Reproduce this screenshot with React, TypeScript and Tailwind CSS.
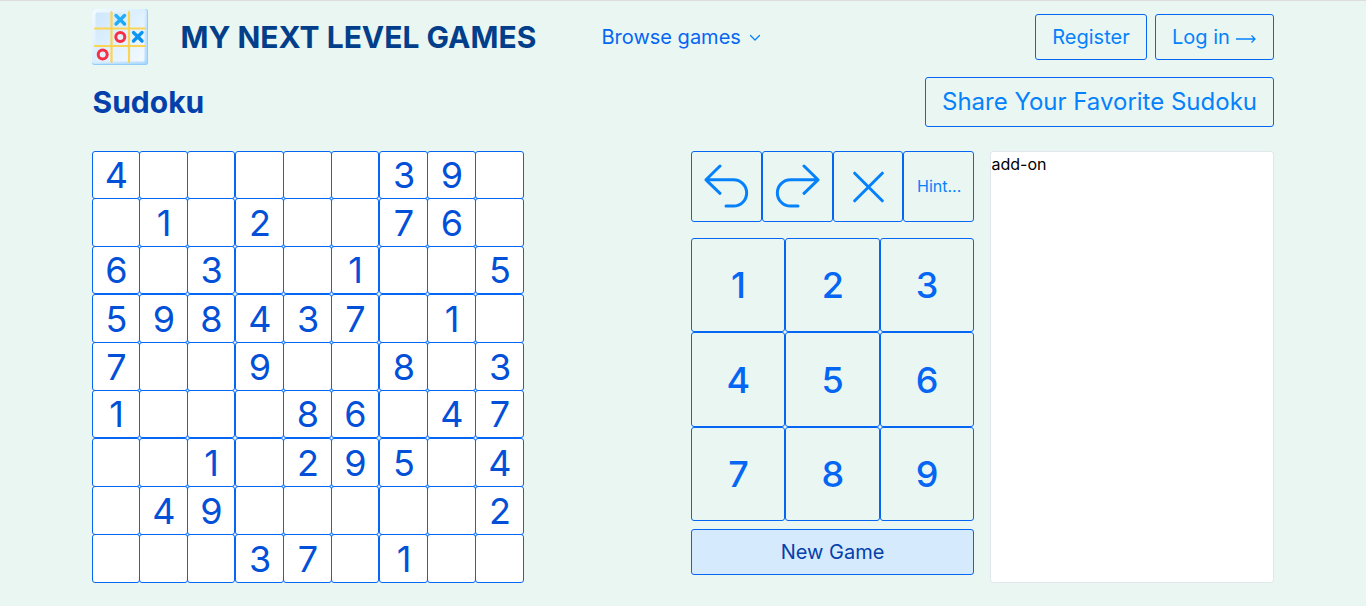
const ROWS = [
  '4.....39.',
  '.1.2..76.',
  '6.3..1..5',
  '598437.1.',
  '7..9..8.3',
  '1...86.47',
  '..1.295.4',
  '.49.....2',
  '...37.1..',
];

// Neighbouring cells inside a 3x3 box share one border line.
const COLS = [
  'w-[48px]', '-ml-px w-[49px]', '-ml-px w-[48px]',
  'w-[49px]', '-ml-px w-[49px]', '-ml-px w-[48px]',
  'w-[49px]', '-ml-px w-[49px]', '-ml-px w-[49px]',
];
const HEIGHTS = [
  'h-[48px]', '-mt-px h-[49px]', '-mt-px h-[48px]',
  'h-[49px]', '-mt-px h-[49px]', '-mt-px h-[48px]',
  'h-[49px]', '-mt-px h-[49px]', '-mt-px h-[49px]',
];

function Logo() {
  return (
    <svg width="56" height="56" viewBox="0 0 56 56" className="shrink-0">
      <defs>
        <linearGradient id="tile" x1="0" y1="0" x2="1" y2="1">
          <stop offset="0" stopColor="#f2faff" />
          <stop offset="0.5" stopColor="#d9eeff" />
          <stop offset="1" stopColor="#b5dcfd" />
        </linearGradient>
        <linearGradient id="cell" x1="0" y1="0" x2="1" y2="1">
          <stop offset="0" stopColor="#cfe7fb" />
          <stop offset="0.5" stopColor="#e0f1ff" />
          <stop offset="1" stopColor="#f2f9ff" />
        </linearGradient>
        <linearGradient id="cross" x1="0" y1="0" x2="1" y2="1">
          <stop offset="0" stopColor="#25b2fb" />
          <stop offset="1" stopColor="#078eee" />
        </linearGradient>
      </defs>
      <rect width="56" height="56" rx="2.5" fill="#93cefb" />
      <rect width="54.8" height="54.8" rx="2.5" fill="url(#tile)" />
      <rect x="3.5" y="3.5" width="49" height="49" rx="2" fill="url(#cell)" />
      <path d="M19.500 3v50M37 3v50M3 19.500h50M3 37h50" stroke="#fcd454" strokeWidth="2.2" strokeLinecap="round" />
      <path d="M24 6.500l8.500 8.500M32.500 6.500l-8.500 8.500M41.500 23.500l8.500 8.500M50 23.500l-8.500 8.500" stroke="url(#cross)" strokeWidth="3.4" strokeLinecap="round" />
      <circle cx="28.300" cy="28" r="4.500" fill="none" stroke="#f72f46" strokeWidth="3" />
      <circle cx="10.700" cy="45.500" r="4.500" fill="none" stroke="#f72f46" strokeWidth="3" />
    </svg>
  );
}

function Undo({ flip = false }: { flip?: boolean }) {
  return (
    <svg width="45" height="45" viewBox="0 0 45 45" fill="none" stroke="currentColor" strokeWidth="3" strokeLinecap="round" strokeLinejoin="round" className={flip ? '-scale-x-100' : ''}>
      <path d="M16 2 2 15.800 16 29.300M2 15.800H29.500a13.100 13.100 0 0 1 0 26.300H22" />
    </svg>
  );
}

export default function App() {
  return (
    <div className="h-[606px] overflow-hidden border-t border-[#dddddd] bg-[#eaf6f2] font-['Inter',sans-serif]">
      <div className="ml-[92px] w-[1182px]">
        <header className="flex h-[72px] items-center">
          <Logo />
          <h1 className="ml-[32.5px] w-[356px] text-[30px] leading-10 font-bold whitespace-nowrap text-[#023e8a]">MY NEXT LEVEL GAMES</h1>
          <a className="ml-[65px] flex items-center gap-2 text-[20px] whitespace-nowrap text-[#0466f2]">
            Browse games
            <svg width="12" height="12" viewBox="0 0 12 12" fill="none" stroke="#0582fb" strokeWidth="1.3" strokeLinecap="round" strokeLinejoin="round"><path d="m1.500 4.500 4.500 4.500 4.500-4.500" /></svg>
          </a>
          <div className="ml-auto flex gap-2 text-[20px] text-[#0582fb]">
            <button className="h-[46px] w-[112px] rounded-[3px] border border-[#0466f2]">Register</button>
            <button className="flex h-[46px] w-[119px] items-center rounded-[3px] border border-[#0466f2] pl-4 whitespace-nowrap">
              Log in
              <svg width="22" height="12" viewBox="0 0 22 12" fill="none" stroke="currentColor" strokeWidth="1.3" className="mt-[3px] ml-[5px]"><path d="M1 6h19M16.500 2.500l3.500 3.500-3.500 3.500" /></svg>
            </button>
          </div>
        </header>
        <div className="mt-1 flex h-[50px] items-center justify-between">
          <h2 className="pl-[0.5px] text-[30px] font-bold text-[#0440ab]">Sudoku</h2>
          <button className="h-[50px] w-[349px] rounded-[3px] border border-[#0466f2] text-[24px] whitespace-nowrap text-[#0582fb]">Share Your Favorite Sudoku</button>
        </div>
        <main className="mt-6 flex items-start">
          <div className="w-[432px]">
            {ROWS.map((row, r) => (
              <div key={r} className={`flex ${HEIGHTS[r]}`}>
                {row.split('').map((value, c) => (
                  <div key={c} className={`flex items-center justify-center rounded-[3px] border border-[#0466f2] bg-white pl-px text-[36px] leading-none text-[#0350d8] ${COLS[c]}`}>
                    {value === '.' ? '' : value}
                  </div>
                ))}
              </div>
            ))}
          </div>
          <div className="ml-[167px] w-[283px]">
            <div className="grid h-[71px] grid-cols-4 text-[#0582fb]">
              <button className="flex items-center justify-center rounded-[3px] border border-[#0466f2]"><Undo /></button>
              <button className="flex items-center justify-center rounded-[3px] border border-[#0466f2]"><Undo flip /></button>
              <button className="flex items-center justify-center rounded-[3px] border border-[#0466f2]">
                <svg width="32" height="32" viewBox="0 0 32 32" fill="none" stroke="currentColor" strokeWidth="3" strokeLinecap="round"><path d="m2.700 2.200 27.600 27.600M30.300 2.200 2.700 29.800" /></svg>
              </button>
              <button className="rounded-[3px] border border-[#0466f2] pb-0.5 pl-px text-[16px]">Hint...</button>
            </div>
            <div className="mt-4 grid h-[283px] grid-cols-3 grid-rows-3 text-[36px] font-medium text-[#0466f2]">
              {[1, 2, 3, 4, 5, 6, 7, 8, 9].map((n) => (
                <button key={n} className={`rounded-[3px] border border-[#0466f2] pl-[0.5px] ${n > 3 ? 'pt-px' : ''}`}>{n}</button>
              ))}
            </div>
            <button className="mt-2 h-[46px] w-full rounded-[3px] border border-[#0466f2] bg-[#d6eafd] text-[20px] text-[#0440ab]">New Game</button>
          </div>
          <aside className="ml-4 h-[432px] w-[284px] rounded-[3px] border border-[#e1e7ea] bg-white pl-[0.5px] text-[16px] text-black">add-on</aside>
        </main>
      </div>
    </div>
  );
}
